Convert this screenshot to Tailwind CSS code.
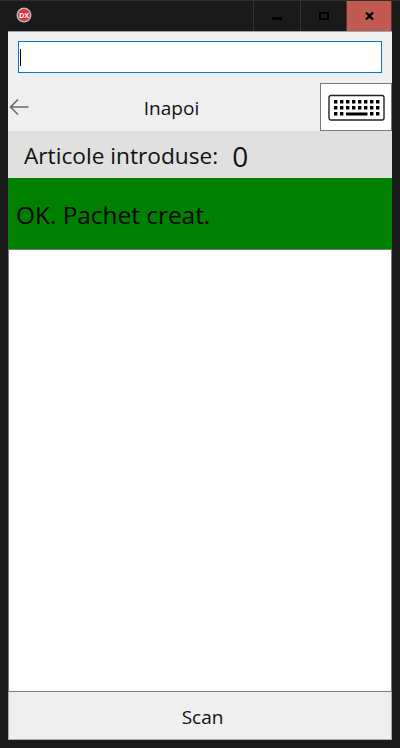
<!DOCTYPE html>
<html>
<head>
<meta charset="utf-8">
<script src="https://cdn.jsdelivr.net/npm/@tailwindcss/browser@4"></script>
</head>
<body class="m-0">
<div class="w-[400px] h-[748px] bg-[#1a1a1a] flex flex-col overflow-hidden font-['Open_Sans','Noto_Sans',sans-serif] text-black border-t border-[#2e2e2e]">
  <div class="h-[30px] flex items-stretch shrink-0">
    <div class="flex-1 pl-[16px] pt-[6px]">
      <svg width="16" height="16" viewBox="0 0 16 16">
        <circle cx="8" cy="8" r="7.5" fill="#b9b9b9"/>
        <circle cx="8" cy="8" r="6" fill="#e0313f"/>
        <text x="8" y="10.5" text-anchor="middle" font-size="7" font-weight="700" fill="#fff" font-family="Liberation Sans">DX</text>
      </svg>
    </div>
    <div class="w-[47px] border-l border-[#333] flex items-center justify-center">
      <div class="w-[10px] h-[3px] bg-black mt-[4px]"></div>
    </div>
    <div class="w-[46px] border-l border-[#333] flex items-center justify-center">
      <div class="w-[10px] h-[8px] border-2 border-black"></div>
    </div>
    <div class="w-[46px] bg-[#c15b51] border-x border-[#4a3533] flex items-center justify-center">
      <svg width="9" height="8" viewBox="0 0 9 8"><path d="M1 0.5 L8 7.5 M8 0.5 L1 7.5" stroke="#000" stroke-width="2.2"/></svg>
    </div>
    <div class="w-[8px]"></div>
  </div>
  <div class="mx-[8px] h-[709px] flex flex-col bg-[#efefef] border-t border-[#9aa3ad]">
    <div class="h-[51px] shrink-0 px-[10px] pt-[9px]">
      <div class="h-[32px] bg-white border border-[#0a74d0] flex items-center pl-[1px]">
        <div class="w-px h-[17px] bg-black"></div>
      </div>
    </div>
    <div class="h-[48px] shrink-0 flex items-stretch">
      <div class="w-[24px] flex items-center justify-start pl-[1px]">
        <svg width="20" height="18" viewBox="0 0 20 18" fill="none"><path d="M19.5 9 H1.5 M9 1.5 L1.5 9 L9 16.5" stroke="#6a6a6a" stroke-width="1.6"/></svg>
      </div>
      <div class="flex-1 flex items-center justify-center text-[19px] text-[#111] pt-[2px] pl-[2px] pr-[11px]">Inapoi</div>
      <div class="w-[72px] bg-white border border-[#7a7a7a] flex items-center justify-center pl-[1px]">
        <svg width="57" height="27" viewBox="0 0 57 27" fill="none" class="block">
          <rect x="1" y="1.5" width="55" height="24.5" rx="2" stroke="#222" stroke-width="1.4"/>
          <g fill="#000">
            <path d="M6 6h3.4v3.4H6zM12 6h3.4v3.4H12zM18 6h3.4v3.4H18zM24 6h3.4v3.4H24zM30 6h3.4v3.4H30zM36 6h3.4v3.4H36zM42 6h3.4v3.4H42zM48 6h3.4v3.4H48z"/>
            <path d="M6 12h3.4v3.4H6zM12 12h3.4v3.4H12zM18 12h3.4v3.4H18zM24 12h3.4v3.4H24zM30 12h3.4v3.4H30zM36 12h3.4v3.4H36zM42 12h3.4v3.4H42zM48 12h3.4v3.4H48z"/>
            <path d="M6 18h3.4v3.4H6zM12 18h3.4v3.4H12zM18 18.5h21.5v2.9H18zM42 18h3.4v3.4H42zM48 18h3.4v3.4H48z"/>
          </g>
        </svg>
      </div>
    </div>
    <div class="h-[47px] shrink-0 bg-[#e0e0e0] flex items-center pl-[16px] text-[22.7px] text-[#111] pt-[3px]">
      <span>Articole introduse:</span>
      <span class="ml-[14px] text-[28px] leading-none">0</span>
    </div>
    <div class="h-[71px] shrink-0 bg-[#008000] flex items-center pl-[8px] text-[24.4px] text-[#050505] pt-[3px]">OK. Pachet creat.</div>
    <div class="flex-1 bg-white border border-[#7a7a7a]"></div>
    <div class="h-[48px] shrink-0 flex items-center justify-center text-[19px] text-[#111] border-x border-b border-[#a8a8a8] pt-[3px] pl-[5px]">Scan</div>
  </div>
</div>
</body>
</html>
